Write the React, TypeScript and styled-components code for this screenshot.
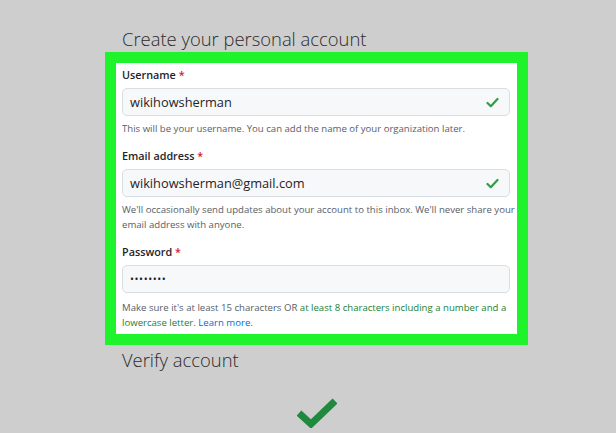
import { createGlobalStyle } from 'styled-components'
import styled from 'styled-components'
import type { FC, ReactNode } from 'react'

const GlobalStyle = createGlobalStyle`
  html, body {
    margin: 0;
    padding: 0;
    background: #cecece;
  }
  * {
    box-sizing: border-box;
  }
`

const SmallCheck: FC = () => (
  <svg width="13" height="11" viewBox="0 0 13 11">
    <path d="M1.5 6 L4.8 9.2 L11.5 2" fill="none" stroke="#2f9e44" strokeWidth="2.2" strokeLinecap="round" strokeLinejoin="round" />
  </svg>
)

const BigCheck: FC = () => (
  <svg width="40" height="32" viewBox="0 0 40 32">
    <path d="M2 17 L14 28 L38 5" fill="none" stroke="#1f8a3d" strokeWidth="7" />
  </svg>
)

type FieldProps = {
  label: string
  value: string
  valid: boolean
  secret?: boolean
  spaced?: boolean
  hint: ReactNode
}

const Field: FC<FieldProps> = ({ label, value, valid, secret, spaced, hint }) => (
  <FieldWrap>
    <Label>
      {label} <Star>*</Star>
    </Label>
    <InputBox>
      <InputValue $secret={secret}>{value}</InputValue>
      {valid && <SmallCheck />}
    </InputBox>
    <Hint $spaced={spaced}>{hint}</Hint>
  </FieldWrap>
)

const App: FC = () => {
  const fields: FieldProps[] = [
    {
      label: 'Username',
      value: 'wikihowsherman',
      valid: true,
      hint: <>This will be your username. You can add the name of your organization later.</>
    },
    {
      label: 'Email address',
      value: 'wikihowsherman@gmail.com',
      valid: true,
      hint: (
        <>
          We'll occasionally send updates about your account to this inbox. We'll never share your
          <br />
          email address with anyone.
        </>
      )
    },
    {
      label: 'Password',
      value: '••••••••',
      valid: false,
      secret: true,
      spaced: true,
      hint: (
        <>
          Make sure it's at least 15 characters OR <Good>at least 8 characters including a number and a</Good>
          <br />
          <Good>lowercase letter.</Good> <LinkText>Learn more.</LinkText>
        </>
      )
    }
  ]

  return (
    <>
      <GlobalStyle />
      <Page>
        <StepTitle>Create your personal account</StepTitle>
        <Highlight>
          <Form>
            {fields.map((f) => (
              <Field key={f.label} {...f} />
            ))}
          </Form>
        </Highlight>
        <StepTitle $after>Verify account</StepTitle>
        <Done>
          <BigCheck />
        </Done>
      </Page>
    </>
  )
}

const Page = styled.div`
  width: 616px;
  height: 433px;
  overflow: hidden;
  background: #cecece;
  display: flex;
  flex-direction: column;
  padding: 27px 88px 0 105px;
  font-family: 'Open Sans', 'Noto Sans', sans-serif;
`

const StepTitle = styled.div<{ $after?: boolean }>`
  font-size: 18.4px;
  font-weight: 300;
  line-height: 24px;
  color: #2b2b2b;
  padding-left: 17px;
  margin-top: ${(p) => (p.$after ? '3px' : '0')};
  margin-bottom: ${(p) => (p.$after ? '0' : '1px')};
`

const Highlight = styled.div`
  border: 11.5px solid #1ff32c;
  background: #ffffff;
  height: 293px;
`

const Form = styled.div`
  display: flex;
  flex-direction: column;
  gap: 12px;
  padding: 4px 7px 3px 6px;
`

const FieldWrap = styled.div`
  display: flex;
  flex-direction: column;
`

const Label = styled.div`
  font-size: 10.8px;
  font-weight: 600;
  line-height: 16px;
  color: #1f2328;
`

const Star = styled.span`
  color: #cf222e;
  font-weight: 600;
`

const InputBox = styled.div`
  margin-top: 5px;
  height: 28px;
  display: flex;
  align-items: center;
  justify-content: space-between;
  padding: 0 10px 0 7px;
  background: #f6f8fa;
  border: 1px solid #d8dee4;
  border-radius: 5px;
`

const InputValue = styled.span<{ $secret?: boolean }>`
  font-size: ${(p) => (p.$secret ? '10.5px' : '12.8px')};
  letter-spacing: ${(p) => (p.$secret ? '0.6px' : '0')};
  color: #1f2328;
`

const Hint = styled.div<{ $spaced?: boolean }>`
  margin-top: ${(p) => (p.$spaced ? '7px' : '5px')};
  margin-right: -6px;
  font-size: 9.6px;
  line-height: 15px;
  white-space: nowrap;
  color: #57606a;
`

const Good = styled.span`
  color: #1a7f37;
`

const LinkText = styled.span`
  color: #0969da;
`

const Done = styled.div`
  margin-top: 24px;
  display: flex;
  justify-content: center;
`

export default App
